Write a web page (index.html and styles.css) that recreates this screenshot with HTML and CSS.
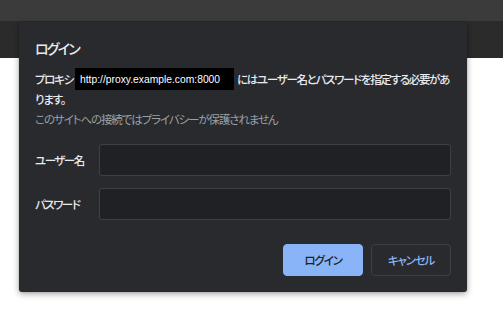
FILE: index.html
```html
<!DOCTYPE html>
<html lang="ja">
<head>
  <meta charset="UTF-8">
  <meta name="viewport" content="width=device-width, initial-scale=1.0">
  <title>ログイン</title>
  <link rel="stylesheet" href="styles.css">
</head>
<body>
  <div class="tabbar"></div>
  <div class="toolbar"></div>

  <div class="dialog">
    <h1 class="dialog-title">ログイン</h1>
    <p class="message">プロキシ<span class="proxy-url">http://proxy.example.com:8000</span>にはユーザー名とパスワードを指定する必要があります。</p>
    <p class="note">このサイトへの接続ではプライバシーが保護されません</p>

    <form class="login-form">
      <div class="field">
        <label for="username">ユーザー名</label>
        <input type="text" id="username" name="username">
      </div>
      <div class="field">
        <label for="password">パスワード</label>
        <input type="password" id="password" name="password">
      </div>
      <div class="actions">
        <button type="button" class="btn btn-primary">ログイン</button>
        <button type="button" class="btn btn-secondary">キャンセル</button>
      </div>
    </form>
  </div>
</body>
</html>
```

FILE: styles.css
```css
body {
  margin: 0;
  padding: 0;
  background: #fff;
  font-family: "Noto Sans CJK JP", "Noto Sans", sans-serif;
  font-feature-settings: "palt";
  color: #e8eaed;
}

.tabbar {
  height: 21px;
  background-color: #3b3b3b;
}

.toolbar {
  height: 37px;
  background-color: #2b2b2b;
}

/* dialog floats over the browser chrome */
.dialog {
  position: absolute;
  left: 19px;
  top: 22px;
  width: 448px;
  box-sizing: border-box;
  padding: 16px;
  background-color: #292a2d;
  border-radius: 3px;
  box-shadow: 0 2px 6px rgba(0, 0, 0, 0.35), 0 0 2px rgba(0, 0, 0, 0.2);
}

.dialog-title {
  margin: 0;
  font-size: 14px;
  font-weight: 500;
  letter-spacing: -1.8px;
  line-height: 20px;
}

.message {
  margin: 11px 0 0;
  font-size: 11.5px;
  font-weight: 500;
  letter-spacing: -1.3px;
  line-height: 20px;
}

.proxy-url {
  display: inline-block;
  width: 159px;
  box-sizing: border-box;
  padding-left: 5px;
  margin: -1px 3px -3px 2px;
  height: 22px;
  line-height: 23px;
  vertical-align: top;
  background-color: #000;
  color: #fff;
  font-family: "Liberation Sans", Arial, sans-serif;
  font-size: 10.3px;
  font-weight: 400;
  letter-spacing: 0;
}

.note {
  margin: 0;
  font-size: 11.5px;
  letter-spacing: -1.1px;
  line-height: 20px;
  color: #9aa0a6;
}

.login-form {
  margin-top: 15px;
}

.field {
  display: flex;
  align-items: center;
  margin-bottom: 12px;
}

.field label {
  width: 64px;
  font-size: 11.5px;
  font-weight: 500;
  letter-spacing: -1.5px;
}

.field input {
  flex: 1;
  height: 32px;
  box-sizing: border-box;
  background-color: #202124;
  border: 1px solid #3c4043;
  border-radius: 3px;
  color: #e8eaed;
}

.actions {
  display: flex;
  justify-content: flex-end;
  gap: 8px;
  margin-top: 24px;
}

.btn {
  width: 80px;
  height: 32px;
  border-radius: 4px;
  font-family: inherit;
  font-feature-settings: "palt";
  font-size: 11.5px;
  font-weight: 500;
  letter-spacing: -1.2px;
  cursor: pointer;
}

.btn-primary {
  background-color: #8ab4f8;
  border: 1px solid #8ab4f8;
  color: #202124;
}

.btn-secondary {
  background-color: transparent;
  border: 1px solid #3c4043;
  color: #8ab4f8;
}
```
